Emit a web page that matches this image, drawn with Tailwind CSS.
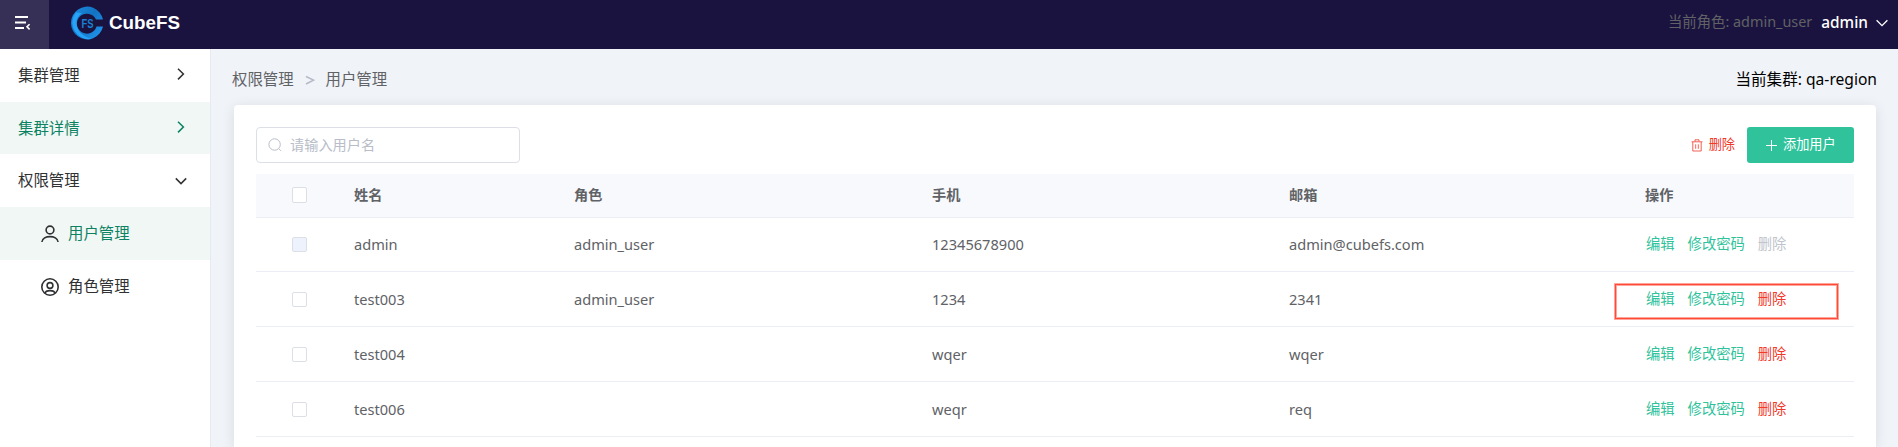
<!DOCTYPE html>
<html lang="zh-CN">
<head>
<meta charset="utf-8">
<title>CubeFS</title>
<script src="https://cdn.jsdelivr.net/npm/@tailwindcss/browser@4"></script>
</head>
<body class="h-[447px] overflow-hidden bg-[#f0f3f8] font-['Noto_Sans','Noto_Sans_CJK_SC',sans-serif] text-[14.6px] leading-5 text-[#606266]">
<header class="flex h-[49px] items-center bg-[#1b133f]">
  <button class="flex h-[49px] w-[49px] items-center bg-[#373056] pl-[15px]">
    <svg class="mt-[-3px] h-4 w-4" viewBox="0 0 16 16" fill="none" stroke="#fff" stroke-width="2"><path d="M0 2h13M0 7.500h11M0 13h9"/><path d="M14.600 9.200l-2.600 2.600 2.600 2.600" stroke-width="1.600"/></svg>
  </button>
  <div class="ml-[21px] mt-[-4px] flex items-center">
    <svg class="h-[34px] w-[34px]" viewBox="0 0 34 34">
      <defs><linearGradient id="g" x1="0" y1="0" x2="1" y2="1"><stop offset="0" stop-color="#1d8fe8"/><stop offset=".45" stop-color="#1272c0"/><stop offset="1" stop-color="#229af5"/></linearGradient></defs>
      <path d="M33 13.500A16.200 16.400 0 1 0 33 20.500H26.500A10 10 0 1 1 26 13.500Z" fill="url(#g)"/>
      <path d="M6 6.500A16.300 16.300 0 0 0 22 32.800C13 31 7 25 6.500 17C6.400 13 8 10 12 7Z" fill="#27a4f8"/>
      <text x="11.500" y="21.500" font-family="Liberation Sans" font-weight="700" font-size="12.500" textLength="12" lengthAdjust="spacingAndGlyphs" fill="#1a80d2">FS</text>
    </svg>
    <span class="ml-[5px] font-['Liberation_Sans',sans-serif] text-[18.8px] leading-6 font-bold text-white">CubeFS</span>
  </div>
  <div class="ml-auto mt-[-4px] flex items-center pr-[10px]">
    <span class="mt-[-1px] text-[14.400px]">当前角色: admin_user</span>
    <span class="ml-[9px] text-[15.4px] font-medium text-white">admin</span>
    <svg class="ml-[8px] h-3 w-3" viewBox="0 0 12 12" fill="none" stroke="#fff" stroke-width="1.300"><path d="M.6 3.200L6 8.600l5.400-5.400"/></svg>
  </div>
</header>
<div class="flex h-[398px]">
  <nav class="w-[211px] shrink-0 border-r border-[#e6e9ee] bg-white text-[15.4px] text-[#303133]">
    <div class="flex h-[53px] items-center pr-[24px] pl-[18px]"><span>集群管理</span><svg class="mt-[-3px] ml-auto h-3 w-3" viewBox="0 0 12 12" fill="none" stroke="currentColor" stroke-width="1.500"><path d="M4 .8L9.400 6 4 11.400"/></svg></div>
    <div class="flex h-[52px] items-center bg-[#f1f7f5] pr-[24px] pl-[18px] text-[#0b8262]"><span class="pt-px">集群详情</span><svg class="mt-[-2px] ml-auto h-3 w-3" viewBox="0 0 12 12" fill="none" stroke="currentColor" stroke-width="1.500"><path d="M4 .8L9.400 6 4 11.400"/></svg></div>
    <div class="flex h-[53px] items-center pr-[23px] pl-[18px]"><span>权限管理</span><svg class="ml-auto h-3 w-3" viewBox="0 0 12 12" fill="none" stroke="currentColor" stroke-width="1.500"><path d="M.8 3.400L6 8.600l5.200-5.200"/></svg></div>
    <div class="flex h-[53px] items-center bg-[#f1f7f5] pl-[41px]"><svg class="h-[18px] w-[18px]" viewBox="0 0 18 18" fill="none" stroke="currentColor" stroke-width="1.600"><circle cx="9" cy="5" r="3.900"/><path d="M.9 17c.6-7.200 15.600-7.200 16.200 0"/></svg><span class="ml-[9px] text-[#0b8262]">用户管理</span></div>
    <div class="flex h-[53px] items-center pl-[41px]"><svg class="h-[18px] w-[18px]" viewBox="0 0 18 18" fill="none" stroke="currentColor" stroke-width="1.600"><circle cx="9" cy="9" r="8.200"/><circle cx="9" cy="7.500" r="2.900"/><path d="M4 15.300c.7-3.600 9.300-3.600 10 0"/></svg><span class="ml-[9px]">角色管理</span></div>
  </nav>
  <main class="flex min-w-0 flex-1 flex-col overflow-hidden pr-[22px] pl-[23px]">
    <div class="flex h-[56px] shrink-0 items-center pt-[5px] text-[15.4px]">
      <span class="-ml-[2px]">权限管理</span><svg class="mx-[11px] h-[10px] w-[10px]" viewBox="0 0 10 10" fill="none" stroke="#b4bac6" stroke-width="1.500"><path d="M1 1.500L8.500 5.200 1 9"/></svg><span>用户管理</span>
      <span class="mt-[-1px] -mr-px ml-auto text-[15.600px] text-black">当前集群: qa-region</span>
    </div>
    <section class="min-h-0 flex-1 rounded-t-[4px] bg-white px-[22px] pt-[22px] shadow-[0_2px_13px_rgba(0,0,0,0.1)]">
      <div class="flex h-9 items-center">
        <div class="flex h-9 w-[264px] items-center rounded-[4px] border border-[#dcdfe6] pl-[11px] text-[#b8bdc8]"><svg class="h-[14px] w-[14px]" viewBox="0 0 14 14" fill="none" stroke="currentColor"><circle cx="6.600" cy="6.500" r="5.700"/><path d="M10.800 10.700l2.200 2.200"/></svg><span class="ml-[8px] text-[14.200px]">请输入用户名</span></div>
        <div class="ml-auto flex items-center text-[13.200px] text-[#f0392b]"><svg class="h-[13px] w-[12px]" viewBox="0 0 12 13" fill="none" stroke="currentColor" stroke-width=".8"><path d="M.5 2.800h11M4 2.500V.8h4v1.700M1.800 3v9h8.400V3M4.700 5.300v4.500M7.300 5.300v4.500"/></svg><span class="mt-[-2px] ml-[6px]">删除</span></div>
        <button class="ml-[12px] flex h-9 w-[107px] items-center rounded-[3px] bg-[#30c29b] pl-[19px] text-[13.200px] text-white"><svg class="h-[11px] w-[11px]" viewBox="0 0 11 11" fill="none" stroke="currentColor"><path d="M5.500 0v11M0 5.500h11"/></svg><span class="mt-[-2px] ml-[6px]">添加用户</span></button>
      </div>
      <div class="relative mt-[11px] grid grid-cols-[98px_220px_358px_357px_1fr]">
        <div class="col-span-5 grid h-[44px] grid-cols-subgrid items-center border-b border-[#ebeef5] bg-[#f8f9fd] pb-px text-[14.200px] font-bold"><i class="ml-[36px] h-4 w-[15px] rounded-[2px] border border-[#dcdfe6] bg-white"></i><span>姓名</span><span>角色</span><span>手机</span><span class="flex"><span class="w-[356px]">邮箱</span><span>操作</span></span></div>
        <div class="col-span-5 grid h-[54px] grid-cols-subgrid items-center border-b border-[#ebeef5] pb-px"><i class="ml-[36px] h-[15px] w-[15px] rounded-[2px] border border-[#dcdfe6] bg-[#edf2fc]"></i><span>admin</span><span>admin_user</span><span>12345678900</span><span class="flex"><span class="w-[357px]">admin@cubefs.com</span><span class="flex gap-[13px] text-[14.300px] text-[#30c29b]"><span>编辑</span><span>修改密码</span><span class="text-[#c0c4cc]">删除</span></span></span></div>
        <div class="col-span-5 grid h-[55px] grid-cols-subgrid items-center border-b border-[#ebeef5]"><i class="ml-[36px] h-[15px] w-[15px] rounded-[2px] border border-[#dcdfe6] bg-white"></i><span>test003</span><span>admin_user</span><span>1234</span><span class="flex"><span class="w-[357px]">2341</span><span class="flex gap-[13px] text-[14.300px] text-[#30c29b]"><span>编辑</span><span>修改密码</span><span class="text-[#f0392b]">删除</span></span></span></div>
        <div class="col-span-5 grid h-[55px] grid-cols-subgrid items-center border-b border-[#ebeef5]"><i class="ml-[36px] h-[15px] w-[15px] rounded-[2px] border border-[#dcdfe6] bg-white"></i><span>test004</span><span></span><span>wqer</span><span class="flex"><span class="w-[357px]">wqer</span><span class="flex gap-[13px] text-[14.300px] text-[#30c29b]"><span>编辑</span><span>修改密码</span><span class="text-[#f0392b]">删除</span></span></span></div>
        <div class="col-span-5 grid h-[55px] grid-cols-subgrid items-center border-b border-[#ebeef5]"><i class="ml-[36px] h-[15px] w-[15px] rounded-[2px] border border-[#dcdfe6] bg-white"></i><span>test006</span><span></span><span>weqr</span><span class="flex"><span class="w-[357px]">req</span><span class="flex gap-[13px] text-[14.300px] text-[#30c29b]"><span>编辑</span><span>修改密码</span><span class="text-[#f0392b]">删除</span></span></span></div>
        <div class="absolute top-[109px] left-[1358px] h-[37px] w-[225px] border border-[#ff4a36]/50"><div class="h-full border border-[#ff4a36]"><div class="h-full border border-[#ff4a36]/50"></div></div></div>
      </div>
    </section>
  </main>
</div>
</body>
</html>
